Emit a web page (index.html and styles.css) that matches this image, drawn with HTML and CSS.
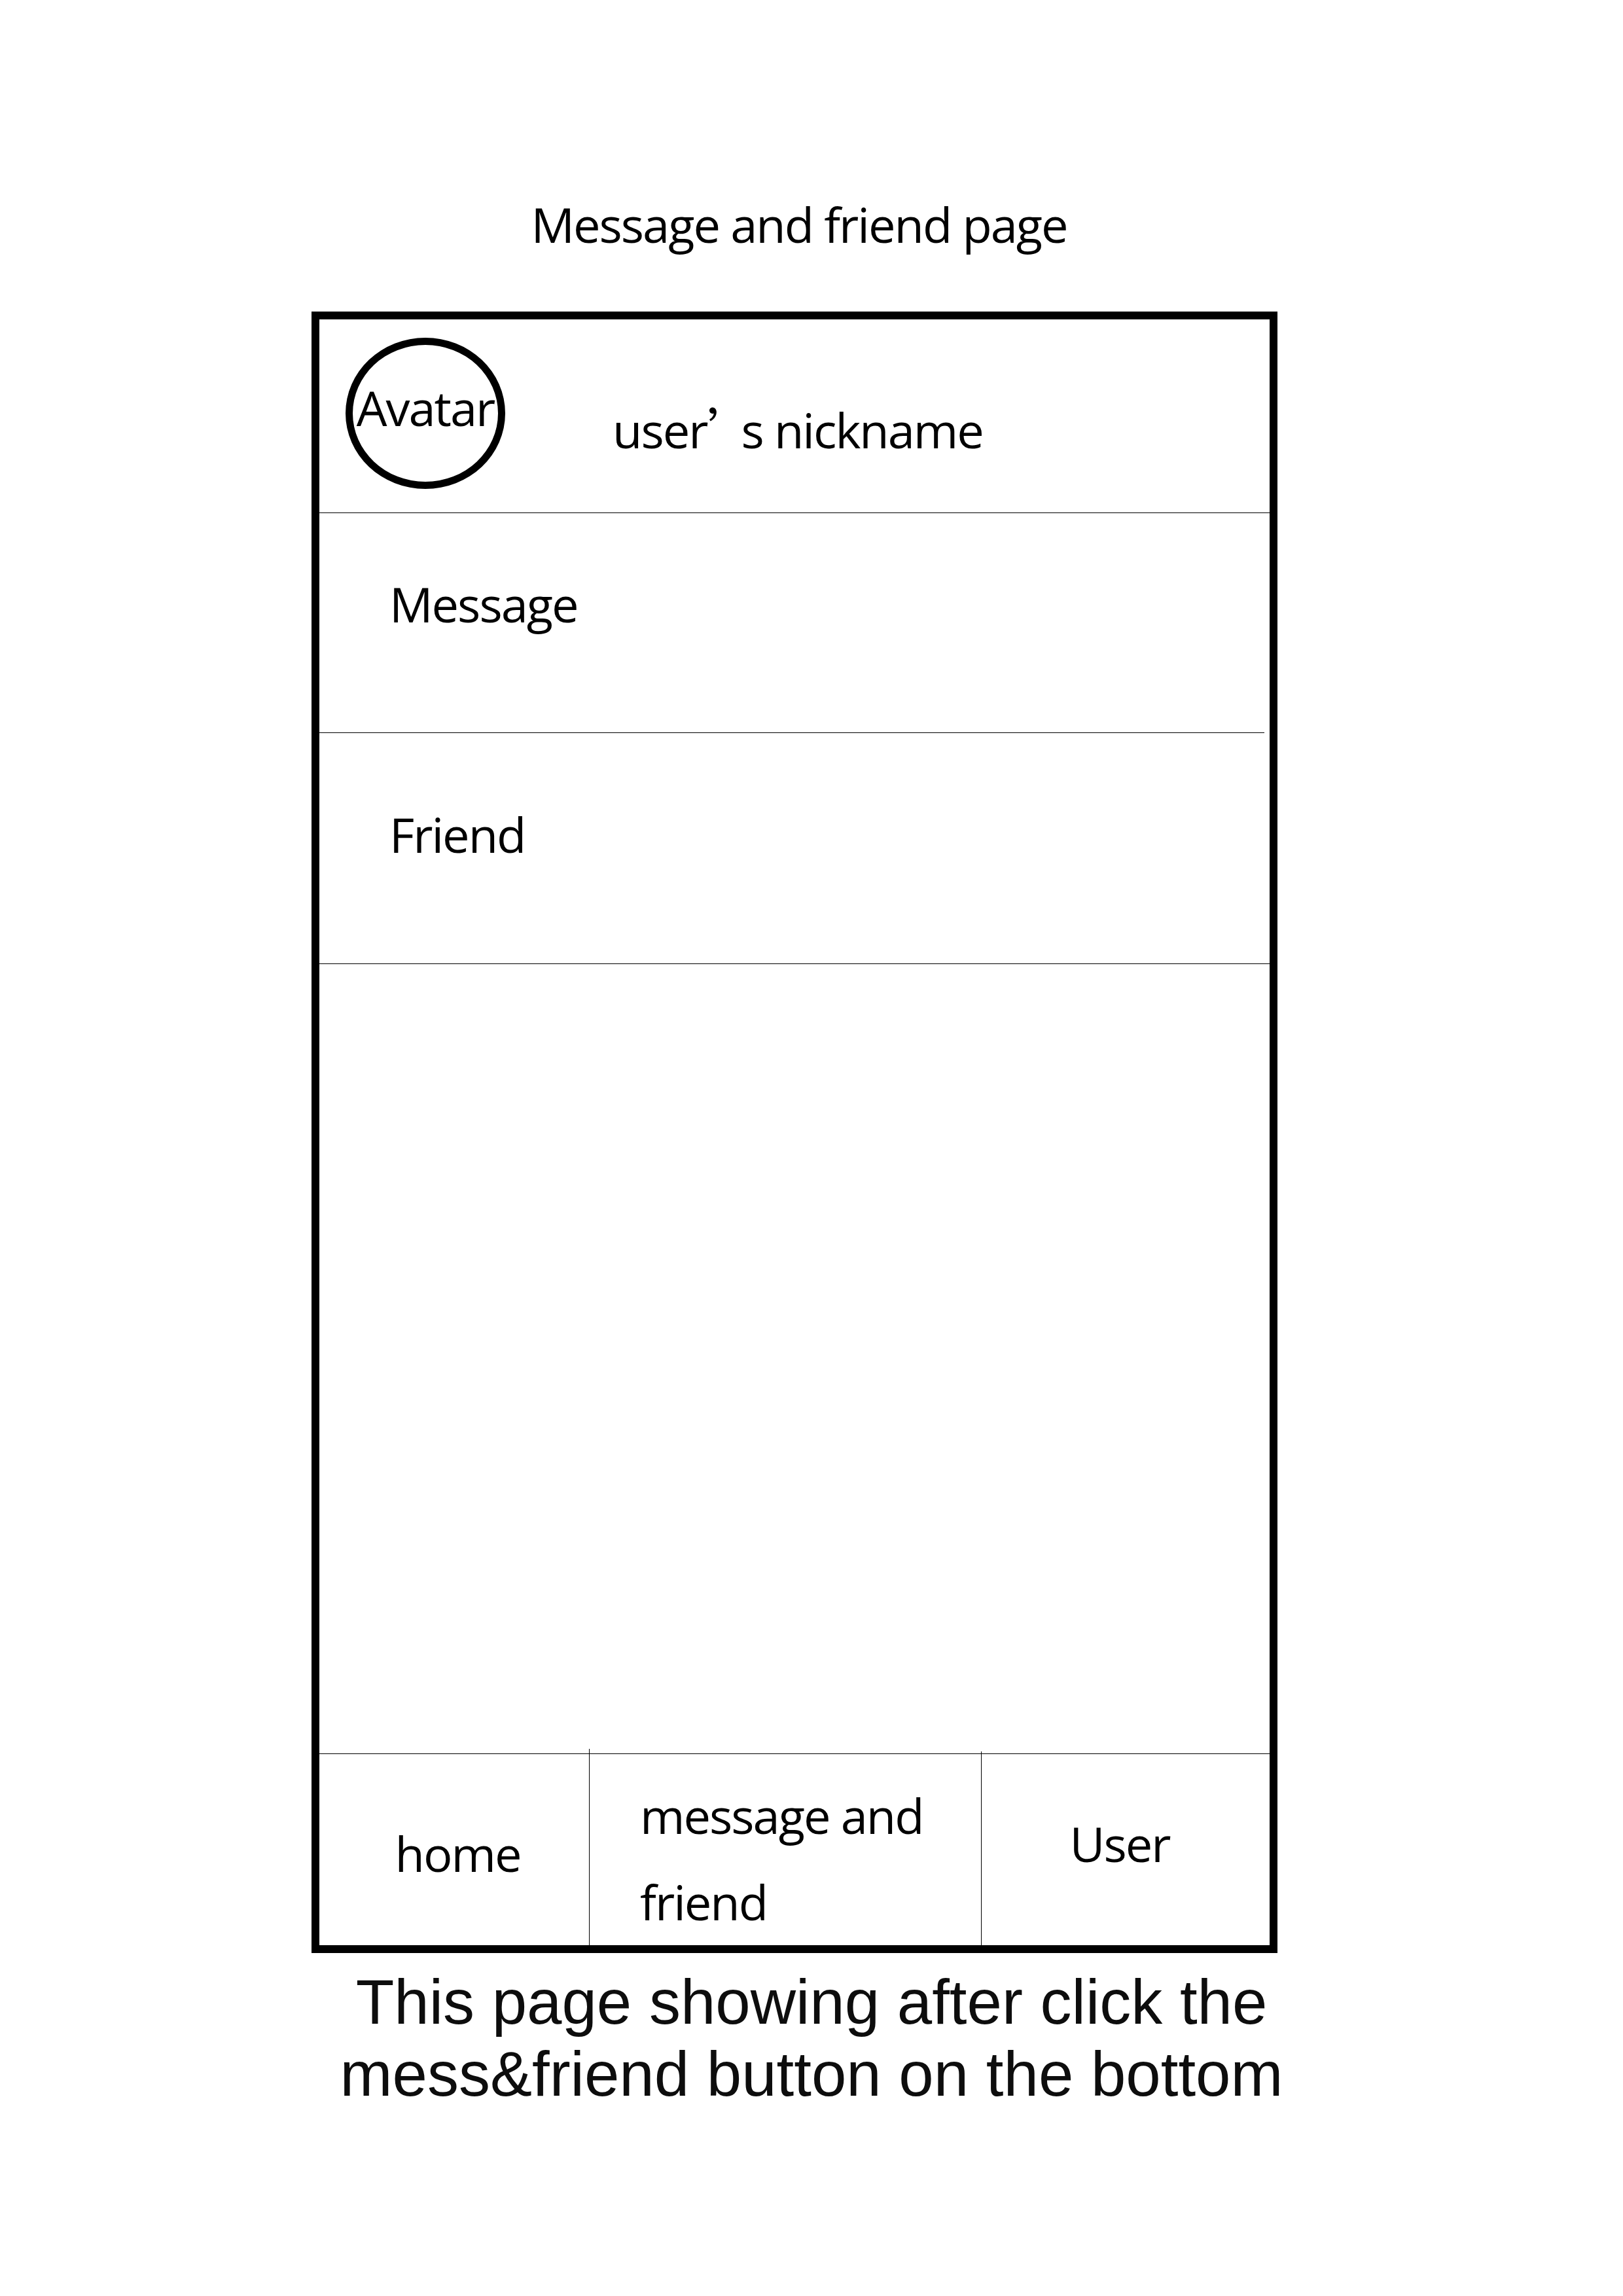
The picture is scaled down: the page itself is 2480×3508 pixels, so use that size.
FILE: index.html
```html
<!DOCTYPE html>
<html lang="en">
<head>
<meta charset="utf-8">
<title>Message and friend page</title>
<link rel="stylesheet" href="styles.css">
</head>
<body>
<main class="page">
  <div class="sheet">
    <h1 class="title label">Message and friend page</h1>
    <section class="phone">
      <header class="profile">
        <div class="avatar"><span class="label">Avatar</span></div>
        <div class="nickname label">user<span class="fw">’</span>s nickname</div>
      </header>
      <div class="row row-message label">Message</div>
      <div class="row row-friend label">Friend</div>
      <div class="content"></div>
      <nav class="tabbar">
        <div class="tab tab-home label">home</div>
        <div class="tab tab-mf label">message and<br>friend</div>
        <div class="tab tab-user label">User</div>
      </nav>
    </section>
  </div>
  <p class="caption">This page showing after click the<br>mess&amp;friend button on the bottom</p>
</main>
</body>
</html>
```

FILE: styles.css
```css
* { box-sizing: border-box; }

html, body {
  margin: 0;
  padding: 0;
  background: #fff;
}

body {
  width: 2480px;
  min-height: 3508px;
  color: #000;
  font-family: "Open Sans", "Noto Sans", sans-serif;
}

.label {
  font-size: 74px;
  line-height: 74px;
  font-weight: 400;
  letter-spacing: -2px;
  white-space: nowrap;
}

.sheet {
  width: 1476px;
  margin-left: 476px;
}

.title {
  margin: 0 0 96px;
  padding: 306px 0 0 14px;
  text-align: center;
}

.phone {
  height: 2508px;
  border: 12px solid #000;
  display: flex;
  flex-direction: column;
}

.profile {
  flex: none;
  height: 296px;
  border-bottom: 1px solid #000;
  display: flex;
  align-items: flex-start;
}

.avatar {
  flex: none;
  width: 244px;
  height: 231px;
  margin: 28px 0 0 40px;
  border: 11px solid #000;
  border-radius: 50%;
  display: flex;
  justify-content: center;
  padding-top: 59px;
}

.nickname {
  margin: 128px 0 0 164px;
}

.fw {
  font-family: "Noto Sans CJK SC", sans-serif;
  letter-spacing: -22px;
}

.row {
  flex: none;
  border-bottom: 1px solid #000;
}

.row-message {
  height: 336px;
  margin-right: 8px;
  padding: 102px 0 0 107px;
}

.row-friend {
  height: 353px;
  padding: 118px 0 0 107px;
}

.content {
  flex: 1;
}

.tabbar {
  flex: none;
  height: 293px;
  border-top: 1px solid #000;
  display: grid;
  grid-template-columns: 413px 599px 1fr;
}

.tab {
  position: relative;
}

.tab-home {
  border-right: 1px solid #000;
  padding: 115px 0 0 11px;
  text-align: center;
}

.tab-home::before {
  content: "";
  position: absolute;
  right: -1px;
  top: -8px;
  width: 1px;
  height: 8px;
  background: #000;
}

.tab-mf {
  border-right: 1px solid #000;
  padding: 28px 0 0 77px;
  line-height: 132px;
}

.tab-mf::before {
  content: "";
  position: absolute;
  right: -1px;
  top: -4px;
  width: 1px;
  height: 4px;
  background: #000;
}

.tab-user {
  padding: 100px 18px 0 0;
  text-align: center;
}

.caption {
  margin: 20px 0 0;
  font-family: "Liberation Sans", Arial, sans-serif;
  font-size: 96px;
  line-height: 110px;
  text-align: center;
  color: #0d0d0d;
}
```
